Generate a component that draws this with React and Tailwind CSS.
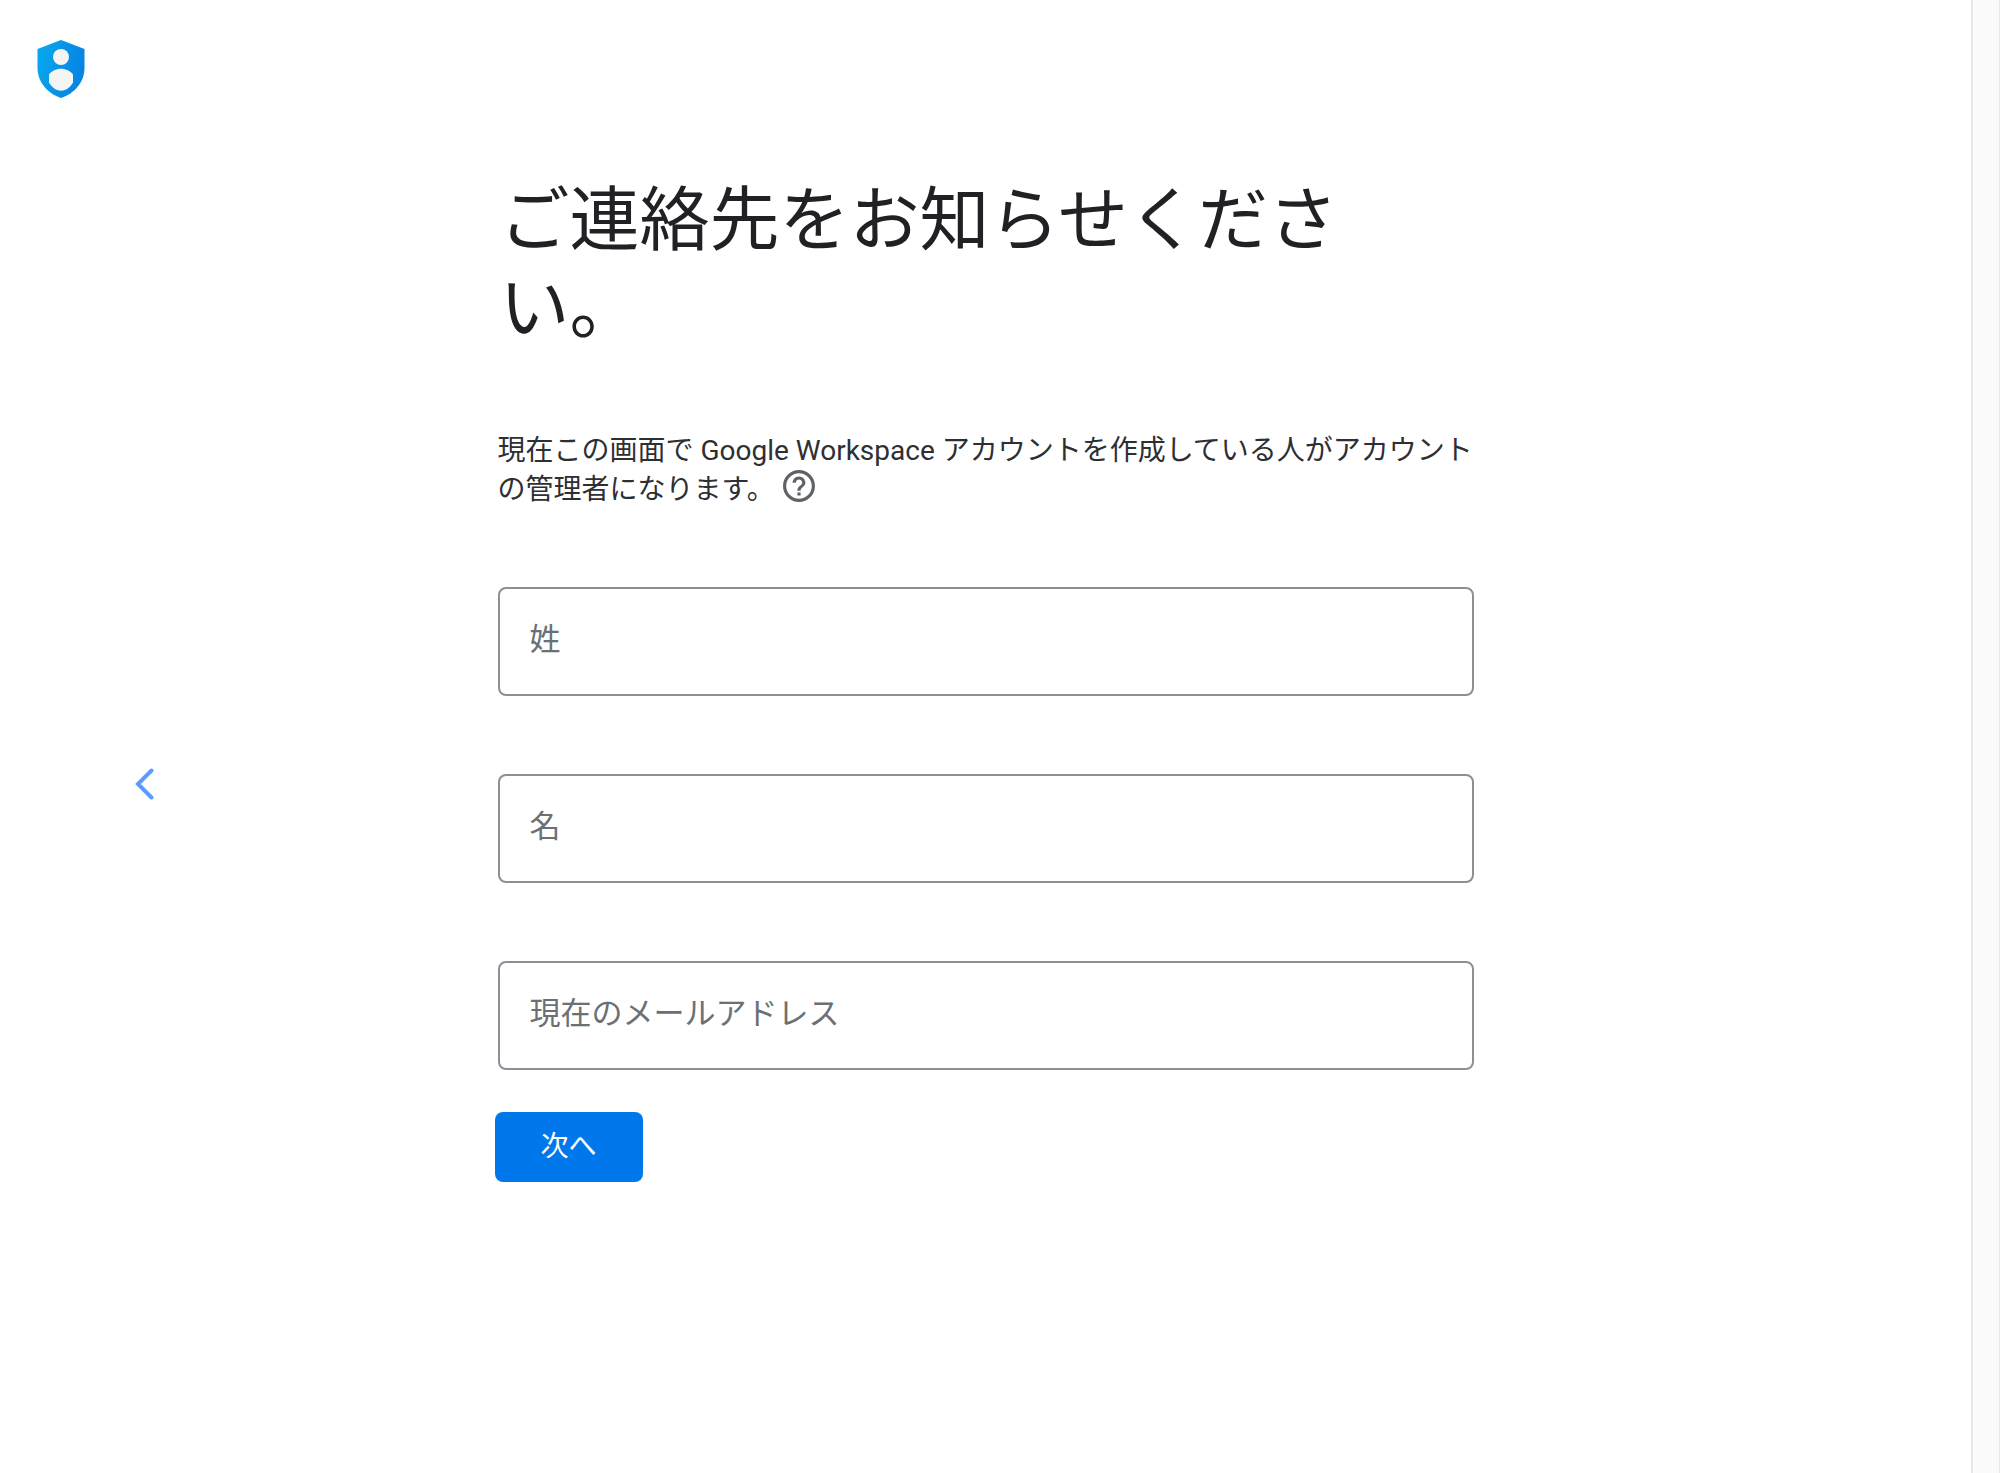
const fields = [
  { id: "last-name", label: "姓", type: "text" },
  { id: "first-name", label: "名", type: "text" },
  { id: "email", label: "現在のメールアドレス", type: "email" },
];

const ShieldLogo = () => (
  <svg viewBox="0 0 50 60" className="w-[50px] h-15" aria-hidden="true">
    <defs>
      <linearGradient id="shield" x1="0" y1="0" x2="1" y2="0.3">
        <stop offset="0" stopColor="#08abed" />
        <stop offset="0.5" stopColor="#0797e8" />
        <stop offset="1" stopColor="#0685e4" />
      </linearGradient>
    </defs>
    <path
      d="M25 0 L48.5 9 V28 C48.5 42 38.5 53.5 25 58 C11.5 53.5 1.5 42 1.5 28 V9 Z"
      fill="url(#shield)"
    />
    <circle cx="25" cy="17" r="8" fill="#f5f5f5" />
    <path
      d="M25 28.7 C30 28.7 34.5 31 37 34.5 V42.5 C34 47.5 30 50.7 25 50.7 C20 50.7 16 47.5 13 42.5 V34.5 C15.5 31 20 28.7 25 28.7 Z"
      fill="#f5f5f5"
    />
  </svg>
);

const BackIcon = () => (
  <svg
    viewBox="0 0 20 34"
    className="w-5 h-[34px]"
    fill="none"
    stroke="#5a9cff"
    strokeWidth="4"
    strokeLinecap="round"
    aria-hidden="true"
  >
    <path d="M17.5 3.5 L4 17 L17.5 30.5" />
  </svg>
);

const HelpIcon = () => (
  <svg viewBox="2 2 20 20" className="size-8" fill="#5f6368" aria-hidden="true">
    <path d="M11 18h2v-2h-2v2zm1-16C6.48 2 2 6.48 2 12s4.48 10 10 10 10-4.48 10-10S17.52 2 12 2zm0 18c-4.41 0-8-3.59-8-8s3.59-8 8-8 8 3.59 8 8-3.59 8-8 8zm0-14c-2.21 0-4 1.79-4 4h2c0-1.1.9-2 2-2s2 .9 2 2c0 2-3 1.75-3 5h2c0-2.25 3-2.5 3-5 0-2.21-1.79-4-4-4z" />
  </svg>
);

const App = () => {
  return (
    <div
      lang="ja"
      className="flex min-h-screen bg-white text-[#202124] font-[Roboto,'Noto_Sans_CJK_JP',sans-serif]"
    >
      {/* Logo and back navigation */}
      <aside className="flex-1 pt-10 px-9">
        <ShieldLogo />
        <button type="button" aria-label="戻る" className="block mt-[667px] ml-[98px]">
          <BackIcon />
        </button>
      </aside>

      {/* Contact form */}
      <main className="w-full max-w-[982px] pt-[177px]">
        <div className="px-[3px]">
          <h1 className="pl-0.5 text-[70px] leading-[88px]">
            ご連絡先をお知らせください。
          </h1>
          <p className="mt-[78px] text-[28px] leading-[39px] text-[#2e2f33]">
            現在この画面で Google Workspace アカウントを作成している人がアカウントの管理者になります。
            <button type="button" aria-label="ヘルプ" className="ml-2 align-top">
              <HelpIcon />
            </button>
          </p>
        </div>

        <form>
          <div className="flex flex-col gap-[78px] mt-[78px] px-[3px]">
            {fields.map((field) => (
              <div key={field.id} className="relative">
                <input
                  id={field.id}
                  type={field.type}
                  placeholder=" "
                  className="peer block w-full h-[109px] px-8 text-[31px] border-2 border-[#8a9095] rounded-lg"
                />
                <label
                  htmlFor={field.id}
                  className="absolute inset-y-0 left-8 flex items-center pb-0.5 text-[31px] text-[#6b7075] peer-[:not(:placeholder-shown)]:hidden"
                >
                  {field.label}
                </label>
              </div>
            ))}
          </div>
          <button
            type="button"
            className="mt-[42px] w-[148px] h-[70px] rounded-lg bg-[#0078eb] text-[28px] text-white"
          >
            次へ
          </button>
        </form>
      </main>

      <div className="flex-1 px-9" />

      {/* Scroll gutter */}
      <div className="w-[29px] border-l-2 border-r border-[#e8e8e8] bg-[#fafafa]" />
    </div>
  );
};

export default App;
